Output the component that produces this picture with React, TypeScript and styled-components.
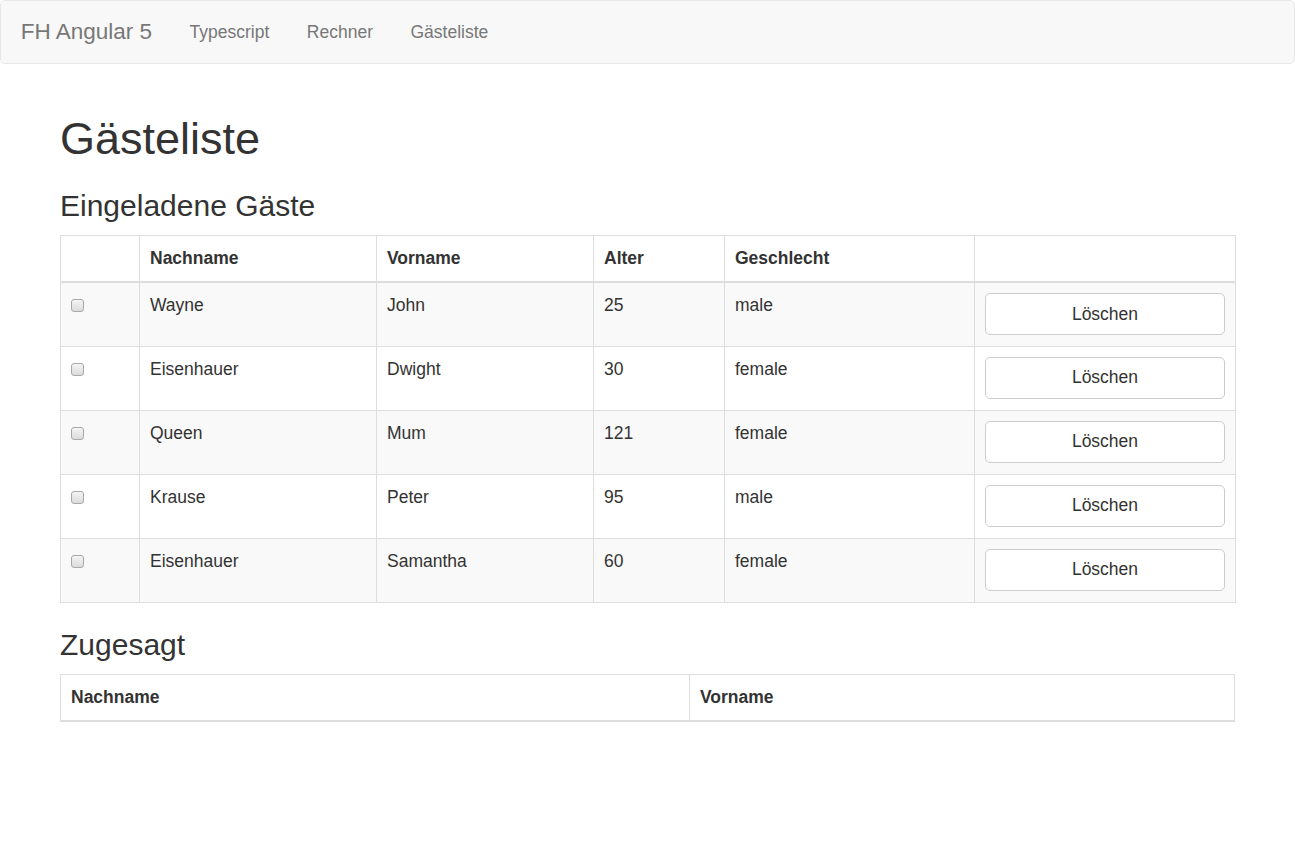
import React from "react";
import styled, { createGlobalStyle } from "styled-components";

const GlobalStyle = createGlobalStyle`
  html, body { margin: 0; padding: 0; background: #fff; }
  body {
    font-family: "Liberation Sans", Arial, Helvetica, sans-serif;
    font-size: 17.5px;
    line-height: 25px;
    color: #333;
  }
  * { box-sizing: border-box; }
`;

const Navbar = styled.nav`
  display: flex;
  align-items: stretch;
  height: 64px;
  background: #f8f8f8;
  border: 1px solid #e7e7e7;
  border-radius: 5px;
  margin-bottom: 25px;
  padding: 0 0 0 1px;
`;

const Brand = styled.a`
  display: block;
  padding: 17.75px 18.75px;
  font-size: 22.5px;
  line-height: 25px;
  color: #777;
  text-decoration: none;
`;

const NavList = styled.ul`
  display: flex;
  list-style: none;
  margin: 0;
  padding: 0;
`;

const NavLink = styled.a`
  display: block;
  padding: 18.75px 18.75px;
  font-size: 17.5px;
  line-height: 25px;
  color: #777;
  text-decoration: none;
`;

const Container = styled.main`
  display: flow-root;
  width: 1175px;
  margin: 0 auto;
`;

const Title = styled.h1`
  font-size: 45px;
  font-weight: 500;
  line-height: 1.1;
  margin: 25px 0 12.5px;
`;

const SubTitle = styled.h3`
  font-size: 30px;
  font-weight: 500;
  line-height: 1.1;
  margin: 25px 0 13.5px;
`;

const Table = styled.table<{ $fixed?: boolean }>`
  width: 100%;
  border-collapse: collapse;
  border-spacing: 0;
  border: 1px solid #ddd;
  margin-bottom: 25px;
  table-layout: ${(p) => (p.$fixed ? "fixed" : "auto")};
`;

const Th = styled.th<{ $w?: number }>`
  ${(p) => (p.$w ? `width: ${p.$w}px;` : "")}
  text-align: left;
  font-weight: bold;
  vertical-align: bottom;
  padding: 10px;
  line-height: 25px;
  border: 1px solid #ddd;
  border-bottom: 2px solid #ddd;
`;

const Row = styled.tr<{ $striped: boolean }>`
  background: ${(p) => (p.$striped ? "#f9f9f9" : "#fff")};
`;

const Td = styled.td`
  vertical-align: top;
  padding: 10px;
  line-height: 25px;
  height: 64px;
  border: 1px solid #ddd;
`;

const Check = styled.input.attrs({ type: "checkbox" })`
  appearance: none;
  -webkit-appearance: none;
  display: block;
  width: 13px;
  height: 13px;
  margin: 6px 0 0;
  border: 1px solid #a9a9a9;
  border-radius: 3px;
  background: linear-gradient(#f4f4f4, #dcdcdc);
`;

const Button = styled.button`
  display: block;
  width: 100%;
  height: 42px;
  padding: 7.5px 15px;
  font-family: inherit;
  font-size: 17.5px;
  line-height: 25px;
  color: #333;
  background: #fff;
  border: 1px solid #ccc;
  border-radius: 5px;
  text-align: center;
`;

type Guest = { last: string; first: string; age: number; gender: string };

const guests: Guest[] = [
  { last: "Wayne", first: "John", age: 25, gender: "male" },
  { last: "Eisenhauer", first: "Dwight", age: 30, gender: "female" },
  { last: "Queen", first: "Mum", age: 121, gender: "female" },
  { last: "Krause", first: "Peter", age: 95, gender: "male" },
  { last: "Eisenhauer", first: "Samantha", age: 60, gender: "female" },
];

export default function App() {
  return (
    <>
      <GlobalStyle />
      <Navbar>
        <Brand href="#">FH Angular 5</Brand>
        <NavList>
          <li><NavLink href="#">Typescript</NavLink></li>
          <li><NavLink href="#">Rechner</NavLink></li>
          <li><NavLink href="#">Gästeliste</NavLink></li>
        </NavList>
      </Navbar>
      <Container>
        <Title>Gästeliste</Title>
        <SubTitle>Eingeladene Gäste</SubTitle>
        <Table $fixed>
          <thead>
            <tr>
              <Th $w={79}></Th>
              <Th $w={237}>Nachname</Th>
              <Th $w={217}>Vorname</Th>
              <Th $w={131}>Alter</Th>
              <Th $w={250}>Geschlecht</Th>
              <Th $w={261}></Th>
            </tr>
          </thead>
          <tbody>
            {guests.map((g, i) => (
              <Row key={i} $striped={i % 2 === 0}>
                <Td><Check /></Td>
                <Td>{g.last}</Td>
                <Td>{g.first}</Td>
                <Td>{g.age}</Td>
                <Td>{g.gender}</Td>
                <Td><Button>Löschen</Button></Td>
              </Row>
            ))}
          </tbody>
        </Table>
        <SubTitle>Zugesagt</SubTitle>
        <Table>
          <thead>
            <tr>
              <Th $w={629}>Nachname</Th>
              <Th>Vorname</Th>
            </tr>
          </thead>
        </Table>
      </Container>
    </>
  );
}
